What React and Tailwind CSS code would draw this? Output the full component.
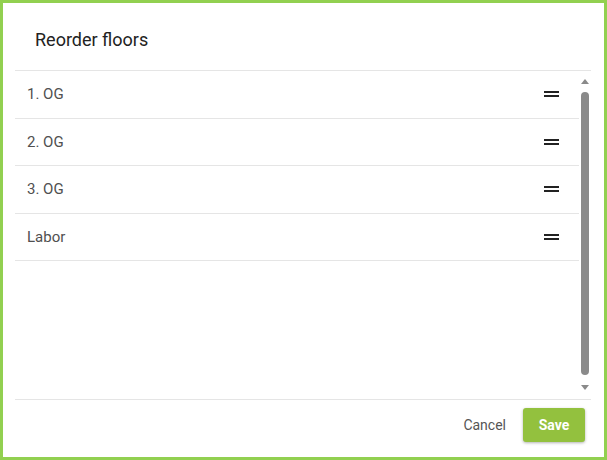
const floors = ["1. OG", "2. OG", "3. OG", "Labor"];

function DragHandle() {
  return (
    <div className="flex flex-col gap-[2px]">
      <span className="block w-[15px] h-[2px] bg-[#222]" />
      <span className="block w-[15px] h-[2px] bg-[#222]" />
    </div>
  );
}

export default function App() {
  return (
    <div
      className="w-[607px] h-[460px] bg-white border-[3px] border-[#92d050] flex flex-col"
      style={{ fontFamily: "Roboto, 'Liberation Sans', sans-serif" }}
    >
      <div className="pl-[32px] pt-[25px] pb-[18px]">
        <h2 className="text-[18px] leading-[24px] font-normal text-[#222]">Reorder floors</h2>
      </div>

      <div className="ml-[12px] mr-[13px] h-[330px] flex border-t border-b border-[#e5e5e5]">
        <div className="flex-1">
          {floors.map((f) => (
            <div
              key={f}
              className="h-[47.6px] pl-[12px] pr-[20px] flex items-center justify-between border-b border-[#e5e5e5]"
            >
              <span className="text-[15px] text-[#505050]">{f}</span>
              <DragHandle />
            </div>
          ))}
        </div>
        <div className="w-[12px] flex flex-col items-center bg-white">
          <div className="h-[21px] flex items-center justify-center">
            <div className="w-0 h-0 border-l-[4px] border-r-[4px] border-b-[5px] border-l-transparent border-r-transparent border-b-[#8a8a8a]" />
          </div>
          <div className="w-[8px] flex-1 rounded-full bg-[#8a8a8a]" />
          <div className="h-[24px] flex items-center justify-center">
            <div className="w-0 h-0 border-l-[4px] border-r-[4px] border-t-[5px] border-l-transparent border-r-transparent border-t-[#8a8a8a]" />
          </div>
        </div>
      </div>

      <div className="flex-1 flex items-start justify-end pt-[8px] pr-[19px] gap-[17px]">
        <button className="h-[34px] text-[14px] text-[#555]">Cancel</button>
        <button className="h-[34px] w-[62px] rounded-[3px] bg-[#93c13e] text-white text-[14px] font-bold shadow-[0_1px_3px_rgba(0,0,0,0.3)]">
          Save
        </button>
      </div>
    </div>
  );
}
